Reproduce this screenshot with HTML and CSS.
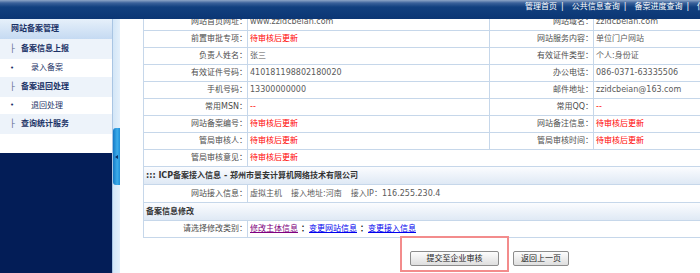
FILE: index.html
```html
<!DOCTYPE html>
<html lang="zh-CN">
<head>
<meta charset="utf-8">
<title>网站备案管理</title>
<link rel="stylesheet" href="styles.css">
</head>
<body>
<div class="page">
  <header class="top">
    <nav class="topnav">
      <a class="tlink">管理首页</a><span class="sep">|</span>
      <a class="tlink">公共信息查询</a><span class="sep">|</span>
      <a class="tlink">备案进度查询</a><span class="sep">|</span>
      <a class="tlink">信息统计</a>
    </nav>
  </header>
  <div class="main">
    <aside class="side">
      <div class="side-head">网站备案管理</div>
      <div class="grp"><span class="tree">├</span>备案信息上报</div>
      <div class="item"><span class="dot">•</span>录入备案</div>
      <div class="grp"><span class="tree">├</span>备案退回处理</div>
      <div class="item short"><span class="dot">•</span>退回处理</div>
      <div class="grp"><span class="tree">├</span>查询统计服务</div>
      <div class="blank"></div>
      <div class="fill"></div>
    </aside>
    <div class="strip"><div class="toggle"><span class="arrow"></span></div></div>
    <section class="content">
      <div class="info">
        <div class="lbl">网站首页网址：</div><div class="val">www.zzidcbeian.com</div>
        <div class="lbl">网站域名：</div><div class="val">zzidcbeian.com</div>

        <div class="lbl">前置审批专项：</div><div class="val red">待审核后更新</div>
        <div class="lbl">网站服务内容：</div><div class="val">单位门户网站</div>

        <div class="lbl">负责人姓名：</div><div class="val">张三</div>
        <div class="lbl">有效证件类型：</div><div class="val">个人:身份证</div>

        <div class="lbl">有效证件号码：</div><div class="val">410181198802180020</div>
        <div class="lbl">办公电话：</div><div class="val">086-0371-63335506</div>

        <div class="lbl">手机号码：</div><div class="val">13300000000</div>
        <div class="lbl">邮件地址：</div><div class="val">zzidcbeian@163.com</div>

        <div class="lbl">常用MSN：</div><div class="val red">--</div>
        <div class="lbl">常用QQ：</div><div class="val red">--</div>

        <div class="lbl">网站备案编号：</div><div class="val red">待审核后更新</div>
        <div class="lbl">网站备注信息：</div><div class="val red">待审核后更新</div>

        <div class="lbl">管局审核人：</div><div class="val red">待审核后更新</div>
        <div class="lbl">管局审核时间：</div><div class="val red">待审核后更新</div>

        <div class="lbl">管局审核意见：</div><div class="val wide red">待审核后更新</div>

        <div class="sect">::: ICP备案接入信息 - 郑州市景安计算机网络技术有限公司</div>

        <div class="lbl tall">网站接入信息：</div>
        <div class="val wide tall">虚拟主机<span class="gap">接入地址:河南</span><span class="gap">接入IP：116.255.230.4</span></div>

        <div class="sect">备案信息修改</div>

        <div class="lbl">请选择修改类别：</div>
        <div class="val wide"><a class="lk visited">修改主体信息</a><span class="colon">：</span><a class="lk">变更网站信息</a><span class="colon">：</span><a class="lk">变更接入信息</a></div>
      </div>
      <div class="actions">
        <span class="hl"><button class="btn b1">提交至企业审核</button></span>
        <button class="btn b2">返回上一页</button>
      </div>
    </section>
  </div>
</div>
</body>
</html>
```

FILE: styles.css
```css
* { box-sizing: border-box; }
html, body { margin: 0; padding: 0; }
body {
  width: 700px;
  height: 273px;
  overflow: hidden;
  background: #fff;
  color: #555;
  font-family: "DejaVu Sans", "Noto Sans CJK SC", sans-serif;
  font-size: 8px;
  line-height: 16px;
}
.page { width: 860px; }

.top {
  height: 19px;
  background: linear-gradient(#8ea6c7 0, #3a619a 3px, #11407f 7px, #0b3674 100%);
}
.topnav {
  display: flex;
  padding-left: 525px;
  line-height: 14px;
  color: #fff;
  white-space: nowrap;
}
.tlink { color: #fff; text-decoration: none; }
.sep { margin: 0 8px 0 4px; }

.main { display: flex; height: 254px; }

.side {
  width: 113px;
  border-right: 1px solid #a9c5e3;
  display: flex;
  flex-direction: column;
  color: #1b3266;
  font-weight: bold;
}
.side-head {
  height: 20px;
  line-height: 20px;
  padding-left: 11px;
  background: linear-gradient(#e6f0fa, #c5daf2);
}
.grp {
  height: 20px;
  line-height: 20px;
  padding-left: 10px;
  background: #edf3fa;
  display: flex;
}
.tree { width: 11px; color: #56688c; font-weight: normal; }
.item {
  height: 18px;
  line-height: 18px;
  padding-left: 10px;
  background: #fff;
  display: flex;
  font-weight: normal;
  color: #1b3266;
}
.item.short { height: 17px; line-height: 17px; }
.dot { width: 21px; font-size: 7px; }
.blank { height: 19px; background: #fff; }
.fill { flex: 1; background: #031d57; }

.strip {
  width: 7px;
  background: linear-gradient(90deg, #d3e6f7, #e4f0fb);
  padding-top: 109px;
}
.toggle {
  height: 57px;
  background: linear-gradient(90deg, #1479c6, #3cacea 60%, #1f8fd8);
  border-radius: 3px 0 0 3px;
  display: flex;
  align-items: center;
  justify-content: center;
}
.arrow {
  width: 0;
  height: 0;
  border-right: 3px solid #0b2e66;
  border-top: 2px solid transparent;
  border-bottom: 2px solid transparent;
}

.content {
  margin-left: 23px;
  width: 693px;
  overflow: hidden;
}
.info {
  margin-top: -5px;
  display: grid;
  grid-template-columns: 104px 242px 104px 242px;
  border-left: 1px solid #c6d7ea;
}
.lbl, .val {
  height: 17px;
  line-height: 16px;
  border-right: 1px solid #c6d7ea;
  border-bottom: 1px solid #c6d7ea;
  white-space: nowrap;
  overflow: hidden;
}
.lbl { text-align: right; color: #4d4d4d; padding-right: 0; }
.val { padding-left: 2px; color: #5a5a5a; }
.wide { grid-column: span 3; }
.tall { height: 18px; line-height: 17px; }
.red { color: #f00; }
.gap { margin-left: 9px; }
.sect {
  grid-column: 1 / -1;
  height: 18px;
  line-height: 17px;
  padding-left: 2px;
  font-weight: bold;
  color: #333;
  background: linear-gradient(#fbfcfe, #dfe9f5);
  border-bottom: 1px solid #c6d7ea;
  border-right: 1px solid #c6d7ea;
}
.lk { color: #0000ee; text-decoration: underline; }
.lk.visited { color: #800080; }
.colon { color: #111; font-weight: bold; margin-left: 3px; }

.actions {
  display: flex;
  justify-content: center;
  gap: 14px;
  margin-top: 13px;
}
.hl { position: relative; display: flex; }
.hl::after {
  content: "";
  position: absolute;
  top: -15px;
  left: -10px;
  right: -10px;
  bottom: -6px;
  border: 2px solid #f38c8c;
}
.btn {
  height: 15px;
  padding: 0;
  border: 1px solid #8c8c8c;
  border-radius: 2px;
  background: linear-gradient(#fdfdfd, #dedede);
  color: #222;
  font-family: "DejaVu Sans", "Noto Sans CJK SC", sans-serif;
  font-size: 8px;
  line-height: 13px;
}
.b1 { width: 89px; }
.b2 { width: 56px; }
```
